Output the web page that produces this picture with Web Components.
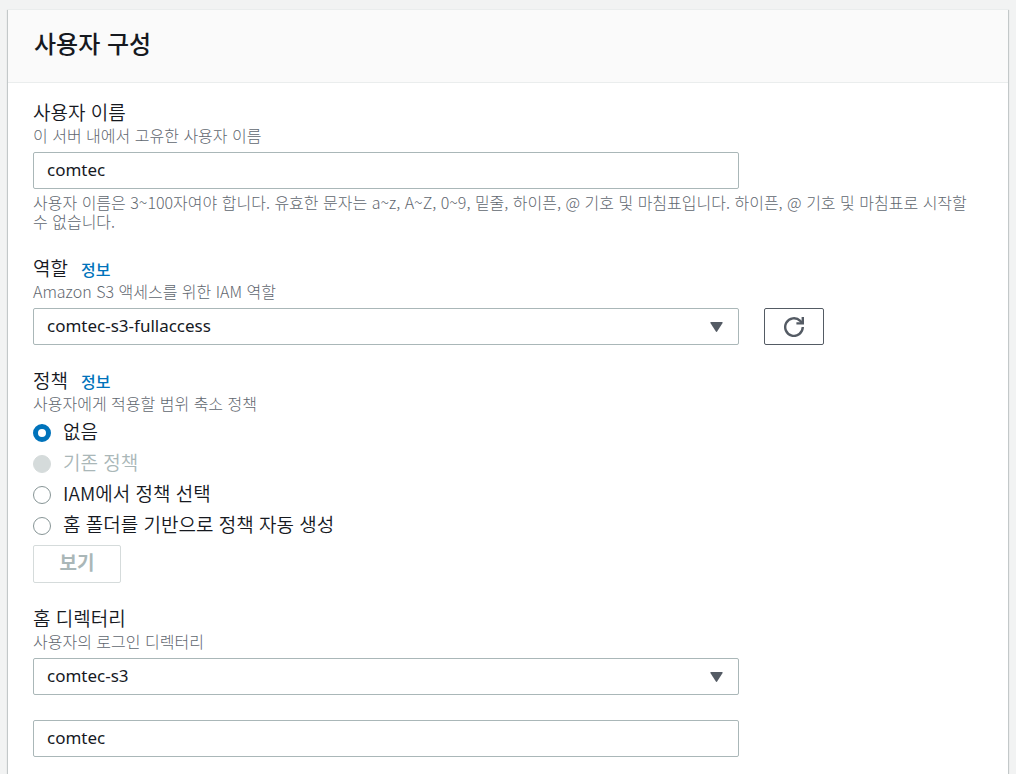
<!DOCTYPE html>
<html lang="ko">
<head>
<meta charset="utf-8">
<title>사용자 구성</title>
<style>
  body {
    margin: 0;
    padding: 9px 8px 0;
    background: #f2f3f3;
    color: #16191f;
    font-family: "Noto Sans CJK KR", sans-serif;
    font-weight: 350;
    --text: #16191f;
    --muted: #5f676f;
    --line: #aab7b8;
    --link: #0073bb;
    --icon: #545b64;
    --latin: "Noto Sans", "Noto Sans CJK KR", sans-serif;
  }
</style>
</head>
<body>
<form-panel>
  <span slot="title">사용자 구성</span>
  <text-field label="사용자 이름" hint="이 서버 내에서 고유한 사용자 이름" value="comtec"
    constraint="사용자 이름은 3~100자여야 합니다. 유효한 문자는 a~z, A~Z, 0~9, 밑줄, 하이픈, @ 기호 및 마침표입니다. 하이픈, @ 기호 및 마침표로 시작할 수 없습니다."></text-field>
  <select-field label="역할" info hint="Amazon S3 액세스를 위한 IAM 역할" value="comtec-s3-fullaccess">
    <refresh-button slot="action"></refresh-button>
  </select-field>
  <policy-field></policy-field>
  <select-field label="홈 디렉터리" hint="사용자의 로그인 디렉터리" value="comtec-s3"></select-field>
  <text-field class="folder" name="홈 폴더" value="comtec"></text-field>
</form-panel>

<script>
const fieldStyles = `
  :host { display: block; }
  * { box-sizing: border-box; }
  .head { display: flex; align-items: baseline; gap: 13px; height: 24px; line-height: 24px; }
  .label { font-size: 19px; line-height: 24px; }
  .head a { font-size: 16px; font-weight: 500; line-height: 24px; color: var(--link); text-decoration: none; }
  .hint { margin: 0 0 6px; font-size: 16px; font-weight: 300; line-height: 22px; color: var(--muted); }
  .row { display: grid; grid-template-columns: repeat(12, minmax(0, 1fr)); column-gap: 25px; }
  .control { grid-column: span 9; position: relative; }
  .action { grid-column: span 3; display: flex; }
  input[type=text], select {
    display: block; width: 100%; height: 37px; margin: 0; padding: 0 13px 2px;
    border: 1px solid var(--line); border-radius: 2px; background: #fff; color: var(--text);
    font-family: var(--latin); font-size: 17px; font-weight: 400; line-height: 24px;
    appearance: none; outline-offset: 2px;
  }
  .arrow { position: absolute; right: 16px; top: 14px; pointer-events: none; fill: var(--icon); }
  .constraint { margin: 0; padding: 4px 0 2px; font-size: 16px; font-weight: 300; line-height: 19px; color: var(--muted); }
`;

const head = (el) => !el.getAttribute('label') ? '' : `
  <div class="head"><label class="label" for="control">${el.getAttribute('label')}</label>${el.hasAttribute('info') ? '<a href="#info">정보</a>' : ''}</div>
  <p class="hint" id="hint">${el.getAttribute('hint')}</p>`;

customElements.define('form-panel', class extends HTMLElement {
  constructor() {
    super();
    this.attachShadow({ mode: 'open' }).innerHTML = `
      <style>
        :host { display: block; background: #fff; box-shadow: 0 1px 1px rgba(0,28,36,.3), 1px 1px 1px rgba(0,28,36,.15), -1px 1px 1px rgba(0,28,36,.15); }
        header { padding: 15px 26px 22px; background: #fafafa; border-top: 1px solid #eaeded; border-bottom: 1px solid #eaeded; }
        h2 { margin: 0; font-size: 24px; font-weight: 500; line-height: 35px; }
        .body { display: flex; flex-direction: column; gap: 23px; padding: 17px 25px 25px; }
        ::slotted(.folder) { margin-top: 2px; }
      </style>
      <header><h2><slot name="title"></slot></h2></header>
      <div class="body"><slot></slot></div>`;
  }
});

customElements.define('text-field', class extends HTMLElement {
  connectedCallback() {
    const constraint = this.getAttribute('constraint');
    const name = this.getAttribute('name');
    this.attachShadow({ mode: 'open' }).innerHTML = `
      <style>${fieldStyles}</style>
      ${head(this)}
      <div class="row"><div class="control">
        <input id="control" type="text" value="${this.getAttribute('value')}"${name ? ` aria-label="${name}"` : ''}>
      </div></div>
      ${constraint ? `<p class="constraint">${constraint}</p>` : ''}`;
  }
});

customElements.define('select-field', class extends HTMLElement {
  connectedCallback() {
    this.attachShadow({ mode: 'open' }).innerHTML = `
      <style>${fieldStyles}</style>
      ${head(this)}
      <div class="row">
        <div class="control">
          <select id="control"><option>${this.getAttribute('value')}</option></select>
          <svg class="arrow" width="13" height="11" viewBox="0 0 13 11" aria-hidden="true"><path d="M1 0h11q1 0 .6 1L7.3 9.3q-.8 1.2-1.6 0L.4 1Q0 0 1 0z"/></svg>
        </div>
        <div class="action"><slot name="action"></slot></div>
      </div>`;
  }
});

customElements.define('refresh-button', class extends HTMLElement {
  constructor() {
    super();
    this.attachShadow({ mode: 'open' }).innerHTML = `
      <style>
        :host { display: block; }
        button { display: flex; align-items: center; justify-content: center; box-sizing: border-box; width: 60px; height: 37px; padding: 0; border: 1px solid var(--icon); border-radius: 2px; background: #fff; cursor: pointer; }
        svg { fill: none; stroke: var(--icon); stroke-width: 2.4; }
      </style>
      <button type="button" aria-label="새로 고침">
        <svg width="20" height="20" viewBox="0 0 20 20"><path d="M18.8 10a8.8 8.8 0 1 1-2.6-6.2L18 6"/><path d="M18.8 0v6.4H12.4"/></svg>
      </button>`;
  }
});

customElements.define('policy-field', class extends HTMLElement {
  constructor() {
    super();
    this.attachShadow({ mode: 'open' }).innerHTML = `
      <style>${fieldStyles}
        fieldset { margin: 0; padding: 0; border: 0; min-width: 0; }
        .hint { margin-bottom: 3px; }
        .option { display: flex; align-items: center; gap: 12px; height: 31px; font-size: 19px; line-height: 24px; }
        .option label { padding-bottom: 4px; }
        .option.off { color: var(--line); }
        input[type=radio] { appearance: none; flex: none; width: 18px; height: 18px; margin: 0; border: 1px solid #879596; border-radius: 50%; background: #fff; }
        input[type=radio]:checked { border: 5px solid var(--link); }
        input[type=radio]:disabled { border-color: #d5dbdb; background: #d5dbdb; }
        button { display: block; width: 88px; height: 38px; margin: 4px 0 0; padding: 0 0 5px; border: 1px solid #d5dbdb; border-radius: 2px; background: #fff; color: var(--line); font-family: inherit; font-size: 19px; font-weight: 700; line-height: 24px; }
      </style>
      <fieldset aria-labelledby="legend">
        <div class="head"><span class="label" id="legend">정책</span><a href="#info">정보</a></div>
        <p class="hint">사용자에게 적용할 범위 축소 정책</p>
        <div class="option"><input type="radio" name="policy" id="none" checked><label for="none">없음</label></div>
        <div class="option off"><input type="radio" name="policy" id="existing" disabled><label for="existing">기존 정책</label></div>
        <div class="option"><input type="radio" name="policy" id="iam"><label for="iam">IAM에서 정책 선택</label></div>
        <div class="option"><input type="radio" name="policy" id="auto"><label for="auto">홈 폴더를 기반으로 정책 자동 생성</label></div>
        <button type="button" disabled>보기</button>
      </fieldset>`;
  }
});
</script>
</body>
</html>
